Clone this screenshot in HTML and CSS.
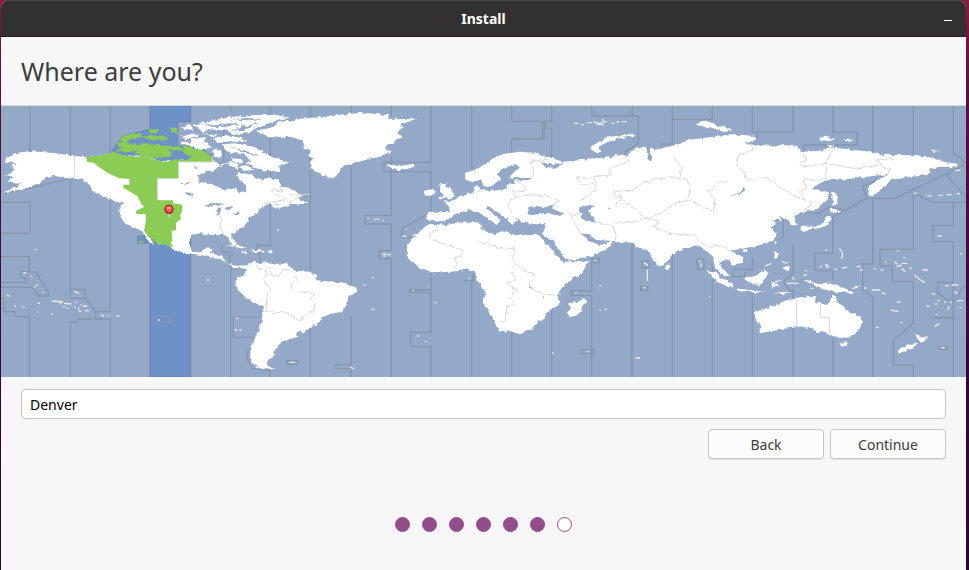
FILE: index.html
```html
<!DOCTYPE html>
<html lang="en">
<head>
    <meta charset="UTF-8">
    <meta name="viewport" content="width=device-width, initial-scale=1.0">
    <title>Install</title>
    <link rel="stylesheet" href="styles.css">
</head>
<body>

<div class="window">
    <header class="titlebar">
        <span class="titlebar-name">Install</span>
        <button class="minimize" type="button" aria-label="Minimize"></button>
    </header>

    <main>
        <h1>Where are you?</h1>

        <!-- Time zone map -->
        <svg class="map" viewBox="3 318 2895 813" role="img" aria-label="Time zone map">
            <defs>
                <filter id="coast" x="0" y="0" width="100%" height="100%" color-interpolation-filters="sRGB">
                    <feTurbulence type="fractalNoise" baseFrequency="0.07" numOctaves="2" seed="4" result="noise"/>
                    <feDisplacementMap in="SourceGraphic" in2="noise" scale="13" xChannelSelector="R" yChannelSelector="G"/>
                    <feGaussianBlur stdDeviation="1"/>
                </filter>
            </defs>
            <rect class="sea" x="0" y="315" width="2901" height="820"/>

            <!-- selected zone -->
            <path class="zone" d="M450 318H572V365H533V437H575L605 446 638 470V486H572V1131H450V729H413V708H450V480H330L338 450 355 425 370 408 450 388Z"/>

            <!-- zone borders -->
            <g class="borders">
                <path d="M90 318V460M3 607H90V700H3M3 770H88V815L107 817 147 878 145 888H115L97 862H3M63 815H88M63 815V830L80 840V847H3M3 895H12V935H45V950H88V1131"/>
                <path d="M211 318V465M211 535V868H255V895L287 935H331M211 868V895H255M287 935V957H232V967H211V1131M331 318V460M331 590V935M287 957H331V1131M12 580L100 562 211 535M223 466V533"/>
                <path d="M692 318V335M671 350V490L640 515V550M633 560L635 590 628 610 640 630 650 650M665 655L668 680 660 690 672 702M665 735V757H690V795M692 795V1131M700 952H780M700 952V1012H762M811 318V350M811 400V736H772L782 785M811 1110V1131M931 318V352M931 460V810M931 980V1131M1054 318V340M1054 490V855M1054 950V1094H1007V1106H1054V1131"/>
                <path d="M1174 318V350M1174 470V646H1096V672H1174V752H1138V776H1174V1131M1293 318V487H1152V515H1293V638L1206 685V713H1235M1293 818V870H1228V877H1293V997H1232V1040H1293V1131M1415 318V520M1415 845V1131M1393 842H1420V820"/>
                <path d="M1535 318V364H1627V417H1535V455M1632 364V417M1655 318V364H1637V385H1655V475M1775 318V348H1915V430L1876 455V468M1897 318V348M2017 318V432H1985V445M2017 358H2137V318M1535 995V1131M1655 915V1131M1775 770V872H1715V887H1775V1131M1775 776H1796V788H1775M1896 730V1131M2017 762V1131M2137 800V1131M1743 1049H1783V1060H1743ZM1925 783H1948V804H1925ZM1922 860H1943V872H1922ZM2092 777H2112V808H2092Z"/>
                <path d="M2257 318V397H2379V318M2272 397V415M2499 318V397H2571V435H2412V455M2618 318V460M2740 318V464M2860 318V460L2890 480V495L2846 518V535L2898 590M2846 518L2685 595H2600L2588 560 2675 520M2600 595L2500 650M2400 638L2457 640 2490 620 2530 630M2350 655V710L2335 720M2498 650V760H2445V812H2498V840M2618 595V792H2588V870L2618 890V1131M2720 570L2800 607H2898M2740 580V748H2640V797H2677V845H2740V970L2680 1020V1095H2740V1131M2860 607V677H2798V725H2860V847H2813V880L2845 900H2870L2885 865 2898 860M2860 850V1131M2800 954H2860M2257 870V1131M2379 735V820L2350 845 2370 872H2379V1131M2499 1010V1131M2200 808H2257V770M2198 815V830H2235V815M2818 1040H2842V1048H2818Z"/>
                <path d="M462 950H514V967H462ZM860 1082H893V1093H860ZM745 1050L740 1070 755 1105 810 1112"/>
            </g>

            <g class="land" filter="url(#coast)">
                <!-- North America -->
                <path d="M20 475L45 460 95 453 130 457 165 460 258 472 330 462 380 466 440 472 500 484 560 480 640 484 660 495 690 485 716 492 712 515 755 525 785 540 800 535 835 538 848 560 885 572 905 588 880 600 868 612 930 612 900 602 895 590 870 606 868 618 835 628 812 618 838 612 790 615 775 640 745 653 742 668 715 690 697 700 697 715 709 733 700 739 687 714 668 704 640 706 600 700 575 705 566 730 578 755 605 757 617 746 637 743 628 760 665 768 682 790 705 797 738 796 742 806 700 803 677 785 650 775 610 768 560 762 520 750 490 725 460 712 445 705 462 735 440 718 425 690 390 680 362 655 357 625 370 610 340 605 312 590 280 575 265 548 235 535 200 532 160 528 140 530 118 548 70 568 8 578 50 560 65 548 20 545 40 530 12 525 45 510 30 498 50 490 15 485Z"/>
                <!-- Baffin and the arctic islands -->
                <path d="M665 436L700 430 760 440 815 470 868 488 835 498 840 516 800 512 770 505 735 490 755 482 728 460 690 460ZM580 375L640 360 700 350 760 345 830 345 870 353 820 365 780 378 740 400 700 405 680 392 640 388 610 395ZM575 415L620 412 610 425 640 440 600 450 570 438ZM640 415L680 405 725 414 740 424 690 424 650 430ZM540 410L580 400 600 406 560 418ZM543 382L570 374 582 388 555 392ZM640 448L665 448 660 475 640 470ZM695 475L725 478 730 490 705 488ZM720 498L740 496 760 510 730 512ZM600 398L625 404 655 402 640 412ZM542 426L565 425 570 436 545 435Z"/>
                <!-- Greenland -->
                <path d="M772 392L815 382 832 368 900 356 960 352 1000 346 1090 338 1170 346 1165 356 1250 358 1200 372 1212 382 1190 400 1207 410 1180 428 1155 442 1175 455 1140 470 1100 478 1060 490 1030 498 1020 515 1000 535 970 528 945 515 928 490 938 480 925 465 935 455 912 445 905 420 870 410 805 412 778 400Z"/>
                <path d="M1162 494L1180 492 1200 498 1240 492 1243 500 1210 511 1180 508 1170 500Z"/>
                <!-- Caribbean -->
                <path d="M678 736L715 735 745 748 720 744ZM752 752L780 749 793 755 765 758ZM725 755H740L738 760 726 759ZM805 754H817V758H805Z"/>
                <!-- South America -->
                <path d="M703 855L708 838 735 825 738 800 760 785 775 790 800 786 835 792 860 790 868 802 895 813 930 815 948 828 945 840 990 845 1020 850 1050 855 1072 865 1070 877 1045 892 1040 915 1025 935 1000 940 965 952 960 965 935 980 915 995 888 997 895 1010 868 1018 850 1025 835 1035 832 1045 820 1060 823 1065 802 1085 800 1095 825 1106 790 1108 765 1098 750 1080 752 1050 762 1015 780 985 785 960 792 920 745 900 720 875Z"/>
                <!-- Africa -->
                <path d="M1290 672L1340 675 1370 668 1440 665 1442 688 1485 706 1500 694 1550 704 1618 706 1640 735 1665 760 1690 785 1768 784 1742 820 1690 858 1670 885 1681 905 1672 918 1640 935 1637 955 1615 965 1600 985 1560 1003 1530 993 1502 997 1485 970 1475 955 1460 925 1448 908 1458 880 1440 850 1428 840 1430 820 1405 808 1370 814 1300 818 1255 800 1220 775 1222 735 1240 715 1262 692 1278 678Z"/>
                <path d="M1755 892L1757 905 1735 945 1710 952 1702 940 1710 925 1708 910 1735 905Z"/>
                <!-- Europe and Asia -->
                <path d="M1282 662L1282 635 1345 637 1350 620 1328 605 1358 602 1385 588 1422 578 1418 562 1432 555 1438 572 1455 563 1450 545 1440 538 1420 547 1397 540 1395 522 1440 502 1480 475 1510 462 1560 455 1600 458 1640 470 1680 480 1685 490 1650 492 1615 487 1640 502 1675 503 1690 485 1740 480 1790 475 1830 472 1850 463 1880 470 1890 455 1920 440 1938 440 1945 478 1955 480 1952 448 1985 445 2040 432 2060 420 2130 412 2190 403 2262 407 2265 420 2230 432 2300 437 2360 436 2390 440 2400 455 2460 452 2490 442 2540 448 2600 454 2650 465 2750 466 2800 474 2830 485 2877 492 2870 502 2820 500 2785 507 2795 517 2760 527 2700 533 2672 540 2655 560 2635 572 2615 592 2605 580 2608 558 2632 540 2665 522 2590 532 2540 538 2480 540 2450 555 2440 567 2482 575 2487 590 2470 610 2440 632 2400 637 2380 648 2394 672 2375 680 2365 660 2340 648 2345 660 2305 660 2328 670 2310 682 2330 698 2322 720 2280 735 2235 745 2190 752 2230 772 2228 792 2202 796 2180 778 2158 786 2165 803 2190 828 2172 828 2145 805 2138 768 2115 750 2100 738 2050 745 2017 762 2000 785 1978 800 1960 785 1945 750 1912 742 1900 728 1840 726 1832 738 1800 756 1770 770 1702 782 1680 755 1660 725 1625 702 1640 672 1610 673 1575 668 1545 652 1555 665 1534 673 1520 655 1465 618 1462 630 1502 660 1490 675 1470 660 1440 640 1410 630 1375 638 1350 655 1325 665Z"/>
                <path d="M1320 550L1340 548 1335 560 1350 565 1360 580 1366 590 1350 595 1315 595 1332 585 1320 575 1325 565ZM1275 572L1300 567 1305 580 1290 588 1275 586Z"/>
                <path d="M1770 446L1782 434 1815 414 1860 406 1905 402 1900 408 1850 417 1815 430 1792 444 1808 456 1785 456ZM2088 370L2120 362 2140 370 2160 380 2180 382 2198 392 2170 395 2130 382 2100 380ZM2455 417L2475 410 2510 418 2485 424ZM2530 418L2565 422 2545 425ZM2480 430L2502 435 2490 440ZM2790 452L2820 452 2800 457Z"/>
                <!-- Japan -->
                <path d="M2400 690L2405 680 2440 680 2470 670 2480 648 2492 655 2485 674 2460 684 2430 688 2410 695ZM2490 625L2525 632 2500 640 2488 637ZM2497 575L2508 580 2513 610 2498 617Z"/>
                <!-- South east Asia -->
                <path d="M2120 812L2145 818 2190 850 2205 862 2190 862 2150 845ZM2230 830L2262 830 2295 808 2305 820 2290 845 2275 852 2240 845ZM2205 865L2250 870 2300 876 2270 878 2215 872ZM2320 755L2337 758 2332 775 2322 778ZM2350 800L2368 797 2368 810 2350 808ZM2313 845L2348 840 2325 848 2340 862 2325 856 2317 865ZM2410 840L2430 842 2440 850 2490 848 2530 860 2560 880 2500 875 2460 865 2440 855ZM2230 748H2242V756H2230ZM2323 725L2333 722 2328 738ZM1996 797L2010 797 2010 808 2000 810ZM2320 876L2375 876 2350 882ZM2550 862L2580 857 2570 866Z"/>
                <!-- Australia and New Zealand -->
                <path d="M2265 935L2300 925 2335 912 2360 900 2380 898 2400 892 2448 888 2445 905 2480 915 2490 905 2497 883 2507 890 2515 910 2540 930 2575 948 2587 965 2580 985 2560 1005 2548 1013 2500 1012 2465 992 2455 998 2430 983 2400 980 2360 985 2340 990 2285 998 2278 990 2285 980 2265 955Z"/>
                <path d="M2518 1028L2543 1028 2538 1041 2525 1041ZM2742 998L2760 1010 2785 1013 2765 1028 2755 1020ZM2752 1028L2740 1045 2700 1060 2690 1054 2720 1036Z"/>
            </g>

            <!-- small islands -->
            <g class="islets">
                <path d="M70 819H78M90 829H94M107 855H113M102 861H106M127 877H132M20 885L30 889M43 918H48M68 922H74M112 907L120 911M153 942H158M110 936H114M104 749H110M222 873L238 881M155 903H165M160 903L190 906M178 902L182 913M192 910L214 912M188 920H196M200 925H206M226 907H232M240 914H244M248 918H262M236 922V930M236 934H244M255 932H266M222 922H228M303 944L312 949M323 946H328M350 948H358M474 960H480M620 840H628M707 955H717M703 990H711M718 990H724M868 1087H885M1050 1102L1062 1106M1115 833H1121M1090 855H1096M1114 928H1124M1237 872H1242M1304 908H1310M1252 1008H1258M1275 1024H1280M1148 762H1158M1160 764H1172M1150 768H1156M1102 655H1106M1122 658H1132M1135 658H1140M1148 662H1152M831 690H837M1206 709H1220M1238 705H1250M1218 688H1221M1285 860H1288"/>
                <path d="M1405 836H1410M1725 878H1731M1798 857H1804M1798 931H1803M1814 927H1820M1656 1059H1661M1760 1055H1766M1906 1074H1920M1784 782H1789M1932 788L1944 796M1942 808V842M1930 863H1936M2099 780V786M2104 790V800M2128 891H2132M2135 832H2140M2518 745L2526 755 2528 770 2522 775M2410 825H2420M2415 812H2422M2460 800H2466M2475 795H2485M2478 801H2488M2503 808H2512M2525 804L2542 802M2570 800H2582M2580 810H2588M2620 806H2628M2642 810H2650M2655 787H2660M2683 785L2692 793M2690 800L2705 795M2705 790H2722M2705 805L2715 815M2710 773H2716M2690 752H2696M2728 805H2736M2744 825L2758 838 2775 848M2767 810H2784M2592 864H2600M2615 870H2640M2645 878L2656 882M2672 930L2696 935M2690 906H2702M2700 968H2708M2628 982H2636M2835 857H2847M2855 855H2875M2862 875L2872 880M2795 880L2806 883M2812 902H2820M2832 907H2838M2852 903V910M2870 902H2890M2842 930L2848 920M2780 918H2788M2805 912H2812M2806 944H2812M2804 980L2818 970M2823 1043H2834M2880 761H2886M2878 923H2884M2740 580H2750M2777 586H2781M2785 588H2794M2815 586H2829M2840 584H2855M2870 581H2880M2864 511H2882M2812 708H2825M2475 750H2480M2260 850L2280 858M2345 785L2363 790M2295 798L2314 790M2360 850H2395M2378 830L2382 840M2430 865H2440"/>
                <path d="M1722 370H1735M1742 374H1752M1762 368H1775M1780 366L1800 370 1820 364M1790 374H1812M1806 360H1812M1835 370H1844M1850 366H1858M1865 365H1880"/>
            </g>

            <!-- green land of the selected zone -->
            <g class="picked">
                <path d="M258 472L290 467 330 461 338 454 362 464 410 470 440 472 495 486 525 478 560 480 575 470 555 462 545 446 580 447 605 449 638 470V486H536V536H472L474 601H518L520 610 547 614 546 632 540 647 543 657 528 668V690L515 693 517 722 512 728 520 742 500 736 475 725 450 715 432 692 438 660V642H410L407 633 433 620 424 613 412 588 385 572 370 563V554H388V537L358 535 325 520 300 503 280 488 262 486Z"/>
                <g filter="url(#coast)">
                    <path d="M348 428L375 425 400 434 430 430 470 432 500 437 540 440 545 450 500 448 520 462 500 472 450 474 420 468 400 460 415 452 385 456 345 454 365 445ZM368 410L400 400 420 400 425 412 400 416 375 424 352 422ZM445 390L475 387 470 400 450 400ZM425 410L455 404 500 410 503 422 450 420ZM508 383L533 384 534 404 515 394ZM545 438L580 440 575 455 550 450ZM455 720L475 733 490 735 480 722ZM418 723H430V728H418Z"/>
                </g>
            </g>

            <!-- inland water -->
            <g class="water" filter="url(#coast)">
                <path d="M655 500L685 492 715 510 712 535 738 558 738 576 718 580 706 565 685 570 640 556 598 547 594 528 618 512 640 512ZM664 560L672 545 680 560 675 575ZM613 615L640 606 675 614 660 618 640 614 625 622ZM650 624L665 622 658 645 650 642ZM672 618L700 620 690 632 680 628ZM695 642L718 634 716 642ZM558 572L570 576 580 592 565 584ZM540 550L572 546 560 555ZM575 500L600 498 590 504Z"/>
                <path d="M600 372L650 376 690 370 740 374 690 378 650 382ZM690 392L730 380 780 368 735 390ZM620 386L650 392 645 397 615 391ZM690 358L740 354 790 358 740 361ZM690 440L740 452 780 470 740 460Z"/>
                <path d="M1440 560L1455 562 1480 560 1486 548 1503 540 1492 520 1520 500 1550 495 1560 503 1535 520 1528 535 1595 533 1590 540 1540 542 1550 550 1525 550 1518 567 1480 572 1440 570Z"/>
                <path d="M1580 635L1592 620 1610 617 1630 625 1650 615 1667 616 1655 625 1690 640 1680 648 1640 638 1600 645 1580 642ZM1735 622L1770 615 1785 620 1763 632 1782 655 1788 667 1760 665 1745 655 1750 640 1735 632ZM1740 700L1760 703 1790 720 1832 722 1800 736 1775 725ZM1826 622L1832 628 1824 626ZM2190 587L2215 580 2232 563 2235 572 2215 584ZM1590 852L1600 870 1588 862ZM1628 880L1636 898 1630 896Z"/>
            </g>

            <!-- zone borders over land -->
            <g class="inland" filter="url(#coast)">
                <path d="M811 565L845 575 840 555M815 570L820 580 865 598M870 583H931M790 612L845 600 865 615M765 790L775 805 810 805 815 828 840 825 845 810 870 808M798 810V830L790 840 812 870 800 895 798 935 825 940 850 935 880 950 890 960 910 955 920 940 940 935 945 910 930 895 948 880 885 875 870 860 890 845 885 828"/>
                <path d="M1300 720L1390 752V765L1362 775 1372 790 1360 810M1305 675L1310 690 1288 702 1290 718M1432 720L1500 745 1540 745M1543 740L1545 750 1535 780 1575 815 1600 820 1605 830 1590 850 1598 868 1630 882 1680 885M1535 815L1548 840 1520 850 1548 870 1530 895 1545 915 1520 917 1515 965H1500"/>
                <path d="M1630 460L1640 480 1590 485 1600 510 1595 533M1545 540L1575 560 1570 575 1540 572 1545 590 1525 610 1535 640M1545 590L1590 585 1635 587 1675 600 1665 615M1882 475L1885 485 1830 505V525L1780 530 1788 550 1785 572 1745 600 1735 600 1735 610M1780 530L1760 538 1730 530 1738 550 1765 555 1785 545M1700 640L1740 645M1840 575L1900 570 1925 550 1960 540 2010 530 2060 540 2070 560 2065 600 2030 610 1995 630 1960 650 1945 660 1870 600 1845 590ZM1840 575L1865 590 1860 600 1845 620M2020 470L2045 500 2040 530M2065 600L2140 635 2145 600 2125 575 2150 550 2185 545"/>
                <path d="M2250 430L2260 450 2215 465 2210 500 2235 520 2240 540 2300 532 2330 555 2370 580 2410 600 2435 610 2405 640M2500 445L2475 490 2415 500 2400 490 2420 480 2412 460M2475 490L2560 505 2640 495 2670 510 2660 530M2480 500L2475 540 2410 540 2420 565 2400 575 2415 600M2640 495L2630 480 2680 475M1710 645L1725 670 1740 700M1790 665L1840 680 1850 710 1840 725M1845 670L1920 665 1930 650 1980 665 1960 680 2000 700 2080 705 2120 740M2120 740L2160 735 2190 750"/>
            </g>
            <path class="inland" d="M2390 898V980M2462 912V953H2488V1008M645 640L665 655 660 680 672 702M223 466V533M472 600V536H536V486H638V470"/>

            <!-- location pin -->
            <g class="pin">
                <path class="pin-needle" d="M507 640V652"/>
                <circle class="pin-head" cx="507" cy="628" r="12"/>
                <ellipse class="pin-shine" cx="507" cy="624" rx="6" ry="4"/>
            </g>
        </svg>

        <form class="location">
            <input class="city" type="text" value="Denver" aria-label="Location">
            <div class="actions">
                <button class="btn" type="button">Back</button>
                <button class="btn" type="button">Continue</button>
            </div>
        </form>

        <!-- Installer steps -->
        <div class="steps">
            <span class="dot"></span>
            <span class="dot"></span>
            <span class="dot"></span>
            <span class="dot"></span>
            <span class="dot"></span>
            <span class="dot"></span>
            <span class="dot dot-open"></span>
        </div>
    </main>
</div>

</body>
</html>
```

FILE: styles.css
```css
* {
    box-sizing: border-box;
}

body {
    margin: 0;
    min-height: 100vh;
    display: flex;
    font-family: "Noto Sans", "Open Sans", sans-serif;
    font-size: 14px;
    color: #3d3d3d;
    background: linear-gradient(#8c1a3c, #5c0f40 15%, #3a0638 60%, #2c0430);
}

.window {
    flex: 1;
    margin: 0 3px 0 1px;
    background: #f7f7f7;
    border-radius: 8px 8px 0 0;
    overflow: hidden;
}

.titlebar {
    display: grid;
    grid-template-columns: 1fr auto 1fr;
    align-items: center;
    height: 37px;
    padding: 0 10px;
    background: #323030;
    border-top: 1px solid #484646;
    border-bottom: 1px solid #1f1e1e;
    color: #fff;
}

.titlebar-name {
    grid-column: 2;
    font-weight: bold;
}

.minimize {
    justify-self: end;
    width: 16px;
    height: 16px;
    padding: 0 4px;
    border: none;
    background: none;
}

.minimize::before {
    content: "";
    display: block;
    height: 1px;
    margin-top: 4px;
    background: #fff;
}

h1 {
    margin: 0;
    padding: 0 20px;
    font-size: 25px;
    line-height: 68px;
    font-weight: normal;
    border-bottom: 1px solid #d9d9d5;
}

/* Map */
.map {
    display: block;
    width: 100%;
}

.sea,
.water {
    fill: #94a8c8;
}

.zone {
    fill: #6d92c7;
    stroke: #6882ab;
    stroke-width: 3;
}

.borders {
    fill: none;
    stroke: #8496af;
    stroke-width: 4;
}

.land {
    fill: #fff;
}

.islets {
    fill: none;
    stroke: #e6ebea;
    stroke-width: 4;
}

.picked {
    fill: #8bcc55;
}

.inland {
    fill: none;
    stroke: #d5dad7;
    stroke-width: 3;
    stroke-linejoin: round;
}

.pin-needle {
    stroke: #c8cfc4;
    stroke-width: 7;
}

.pin-head {
    fill: #ee5a5a;
    stroke: #b3161c;
    stroke-width: 4;
}

.pin-shine {
    fill: #f7a3a3;
}

/* Form */
.location {
    padding: 12px 20px 0;
}

.city {
    display: block;
    width: 100%;
    height: 30px;
    padding: 0 8px;
    font: inherit;
    color: #000;
    background: #fff;
    border: 1px solid #c6c6c6;
    border-radius: 4px;
}

.actions {
    display: flex;
    justify-content: flex-end;
    gap: 6px;
    margin-top: 10px;
}

.btn {
    width: 116px;
    height: 30px;
    padding: 0;
    font: inherit;
    color: #3d3d3d;
    background: #fcfcfc;
    border: 1px solid #c6c6c6;
    border-radius: 4px;
    box-shadow: 0 1px 1px rgba(0, 0, 0, 0.1);
}

.steps {
    display: flex;
    justify-content: center;
    gap: 12px;
    padding: 58px 0 36px;
}

.dot {
    width: 15px;
    height: 15px;
    border: 1px solid #924d8b;
    border-radius: 50%;
    background: #924d8b;
}

.dot-open {
    background: #fff;
}
```
